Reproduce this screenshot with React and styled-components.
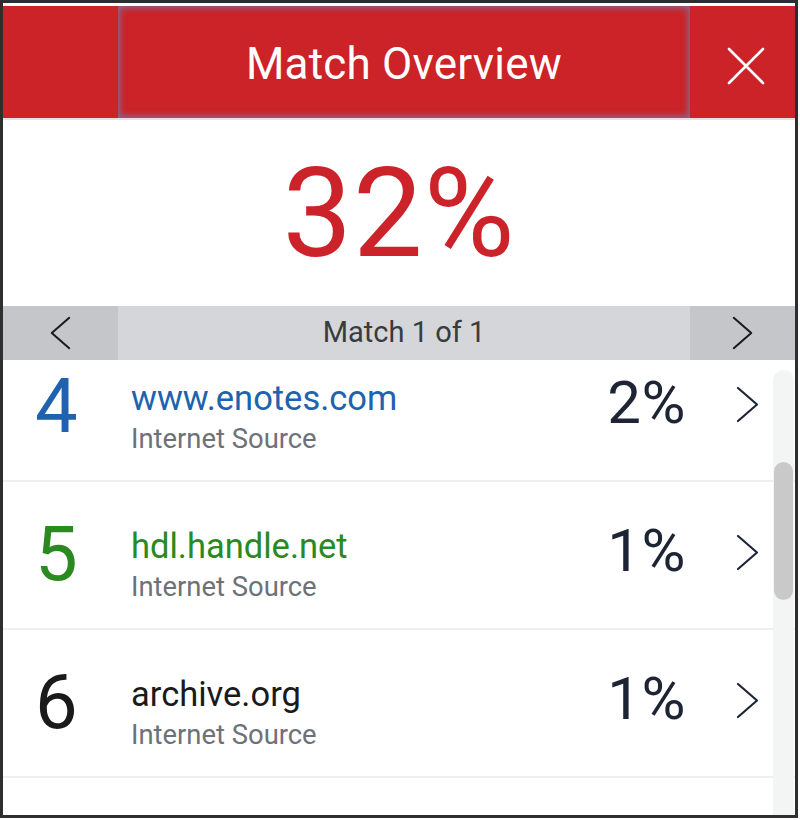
import React, { useLayoutEffect, useRef } from 'react'
import styled, { createGlobalStyle } from 'styled-components'

const GlobalStyle = createGlobalStyle`
  html, body {
    margin: 0;
    padding: 0;
    background: #fff;
  }
  body {
    font-family: Roboto, "Liberation Sans", Arial, sans-serif;
  }
`

const Frame = styled.div`
  width: 798px;
  height: 818px;
  box-sizing: border-box;
  border: 3px solid #2e2e2e;
  padding-top: 3px;
  background: #fff;
  display: flex;
  flex-direction: column;
  overflow: hidden;
`

const Header = styled.div`
  height: 112px;
  flex: none;
  display: grid;
  grid-template-columns: 115px 1fr 105px;
  background: #cb2327;
  border-bottom: 2px solid #eadfe2;
`

const Title = styled.div`
  display: flex;
  align-items: center;
  justify-content: center;
  color: #fff;
  font-size: 44px;
  letter-spacing: 0.2px;
  box-shadow: inset 0 0 6px 2px rgba(110, 130, 190, 0.75);
  padding-top: 3px;
`

const CloseButton = styled.div`
  display: flex;
  align-items: center;
  justify-content: center;
  padding: 8px 0 0 6px;
`

const Score = styled.div`
  height: 186px;
  flex: none;
  display: flex;
  align-items: center;
  justify-content: center;
  color: #cc2229;
  font-size: 124px;
  letter-spacing: 1px;
  line-height: 1;
  padding-top: 2px;
  box-sizing: border-box;
`

const Pager = styled.div`
  height: 54px;
  flex: none;
  display: grid;
  grid-template-columns: 115px 1fr 105px;
  background: #d5d6d9;
  color: #383b40;
  font-size: 29px;
`

const PagerButton = styled.div`
  display: flex;
  align-items: center;
  justify-content: center;
  background: #c5c6c9;
`

const PagerLabel = styled.div`
  display: flex;
  align-items: center;
  justify-content: center;
  padding-bottom: 2px;
`

const ListWrap = styled.div`
  position: relative;
  flex: 1;
  min-height: 0;
`

const ListScroll = styled.div`
  height: 100%;
  box-sizing: border-box;
  padding-bottom: 40px;
  overflow-y: scroll;
  scrollbar-width: none;
  &::-webkit-scrollbar {
    display: none;
  }
`

const Row = styled.div`
  height: 148px;
  box-sizing: border-box;
  border-bottom: 2px solid #efefef;
  display: grid;
  grid-template-columns: 96px 1fr auto 25px;
  align-items: center;
  padding: 0 35px 0 32px;
`

const Rank = styled.div`
  font-size: 76px;
  line-height: 1;
  color: ${p => p.$color};
  padding-bottom: 2px;
`

const Source = styled.div`
  display: flex;
  flex-direction: column;
  margin-top: 20px;
`

const Domain = styled.div`
  font-size: 34.5px;
  line-height: 40px;
  color: ${p => p.$color};
`

const Kind = styled.div`
  font-size: 27.4px;
  line-height: 36px;
  color: #6d7179;
  margin-top: 3px;
`

const Percent = styled.div`
  font-size: 60px;
  line-height: 1;
  letter-spacing: 0.5px;
  color: #1d2535;
  margin-right: 49px;
  padding-bottom: 8px;
`

const RowArrow = styled.div`
  display: flex;
  align-items: center;
  justify-content: center;
  padding-bottom: 6px;
`

const Track = styled.div`
  position: absolute;
  right: 1px;
  top: 10px;
  bottom: 0;
  width: 21px;
  border-radius: 10px 10px 0 0;
  background: #f3f4f4;
`

const Thumb = styled.div`
  position: absolute;
  left: 1px;
  right: 1px;
  top: 92px;
  height: 138px;
  border-radius: 10px;
  background: #c9c9c9;
`

const matches = [
  { n: 4, domain: 'www.enotes.com', color: '#2062ae', pct: '2%' },
  { n: 5, domain: 'hdl.handle.net', color: '#2a8a1f', pct: '1%' },
  { n: 6, domain: 'archive.org', color: '#1a1a1a', pct: '1%' },
]

const Chevron = ({ dir = 'right', color = '#1d2535', w = 23, h = 37 }) => (
  <svg width={w} height={h} viewBox="0 0 23 37" fill="none">
    <polyline
      points={dir === 'right' ? '2,2 21,18.5 2,35' : '21,2 2,18.5 21,35'}
      stroke={color}
      strokeWidth="2.2"
      strokeLinecap="round"
      strokeLinejoin="round"
    />
  </svg>
)

const CloseIcon = () => (
  <svg width="38" height="38" viewBox="0 0 38 38" fill="none">
    <path d="M2 2 L36 36 M36 2 L2 36" stroke="#fff" strokeWidth="2.6" strokeLinecap="round" />
  </svg>
)

export default function App() {
  const listRef = useRef(null)

  // the list is shown scrolled a little, as in the panel
  useLayoutEffect(() => {
    if (listRef.current) listRef.current.scrollTop = 26
  }, [])

  return (
    <>
      <GlobalStyle />
      <Frame>
        <Header>
          <div />
          <Title>Match Overview</Title>
          <CloseButton>
            <CloseIcon />
          </CloseButton>
        </Header>

        <Score>32%</Score>

        <Pager>
          <PagerButton>
            <Chevron dir="left" color="#1a1a1a" h={34} />
          </PagerButton>
          <PagerLabel>Match 1 of 1</PagerLabel>
          <PagerButton>
            <Chevron dir="right" color="#1a1a1a" h={34} />
          </PagerButton>
        </Pager>

        <ListWrap>
          <ListScroll ref={listRef}>
            {matches.map(m => (
              <Row key={m.n}>
                <Rank $color={m.color}>{m.n}</Rank>
                <Source>
                  <Domain $color={m.color}>{m.domain}</Domain>
                  <Kind>Internet Source</Kind>
                </Source>
                <Percent>{m.pct}</Percent>
                <RowArrow>
                  <Chevron />
                </RowArrow>
              </Row>
            ))}
          </ListScroll>
          <Track>
            <Thumb />
          </Track>
        </ListWrap>
      </Frame>
    </>
  )
}
